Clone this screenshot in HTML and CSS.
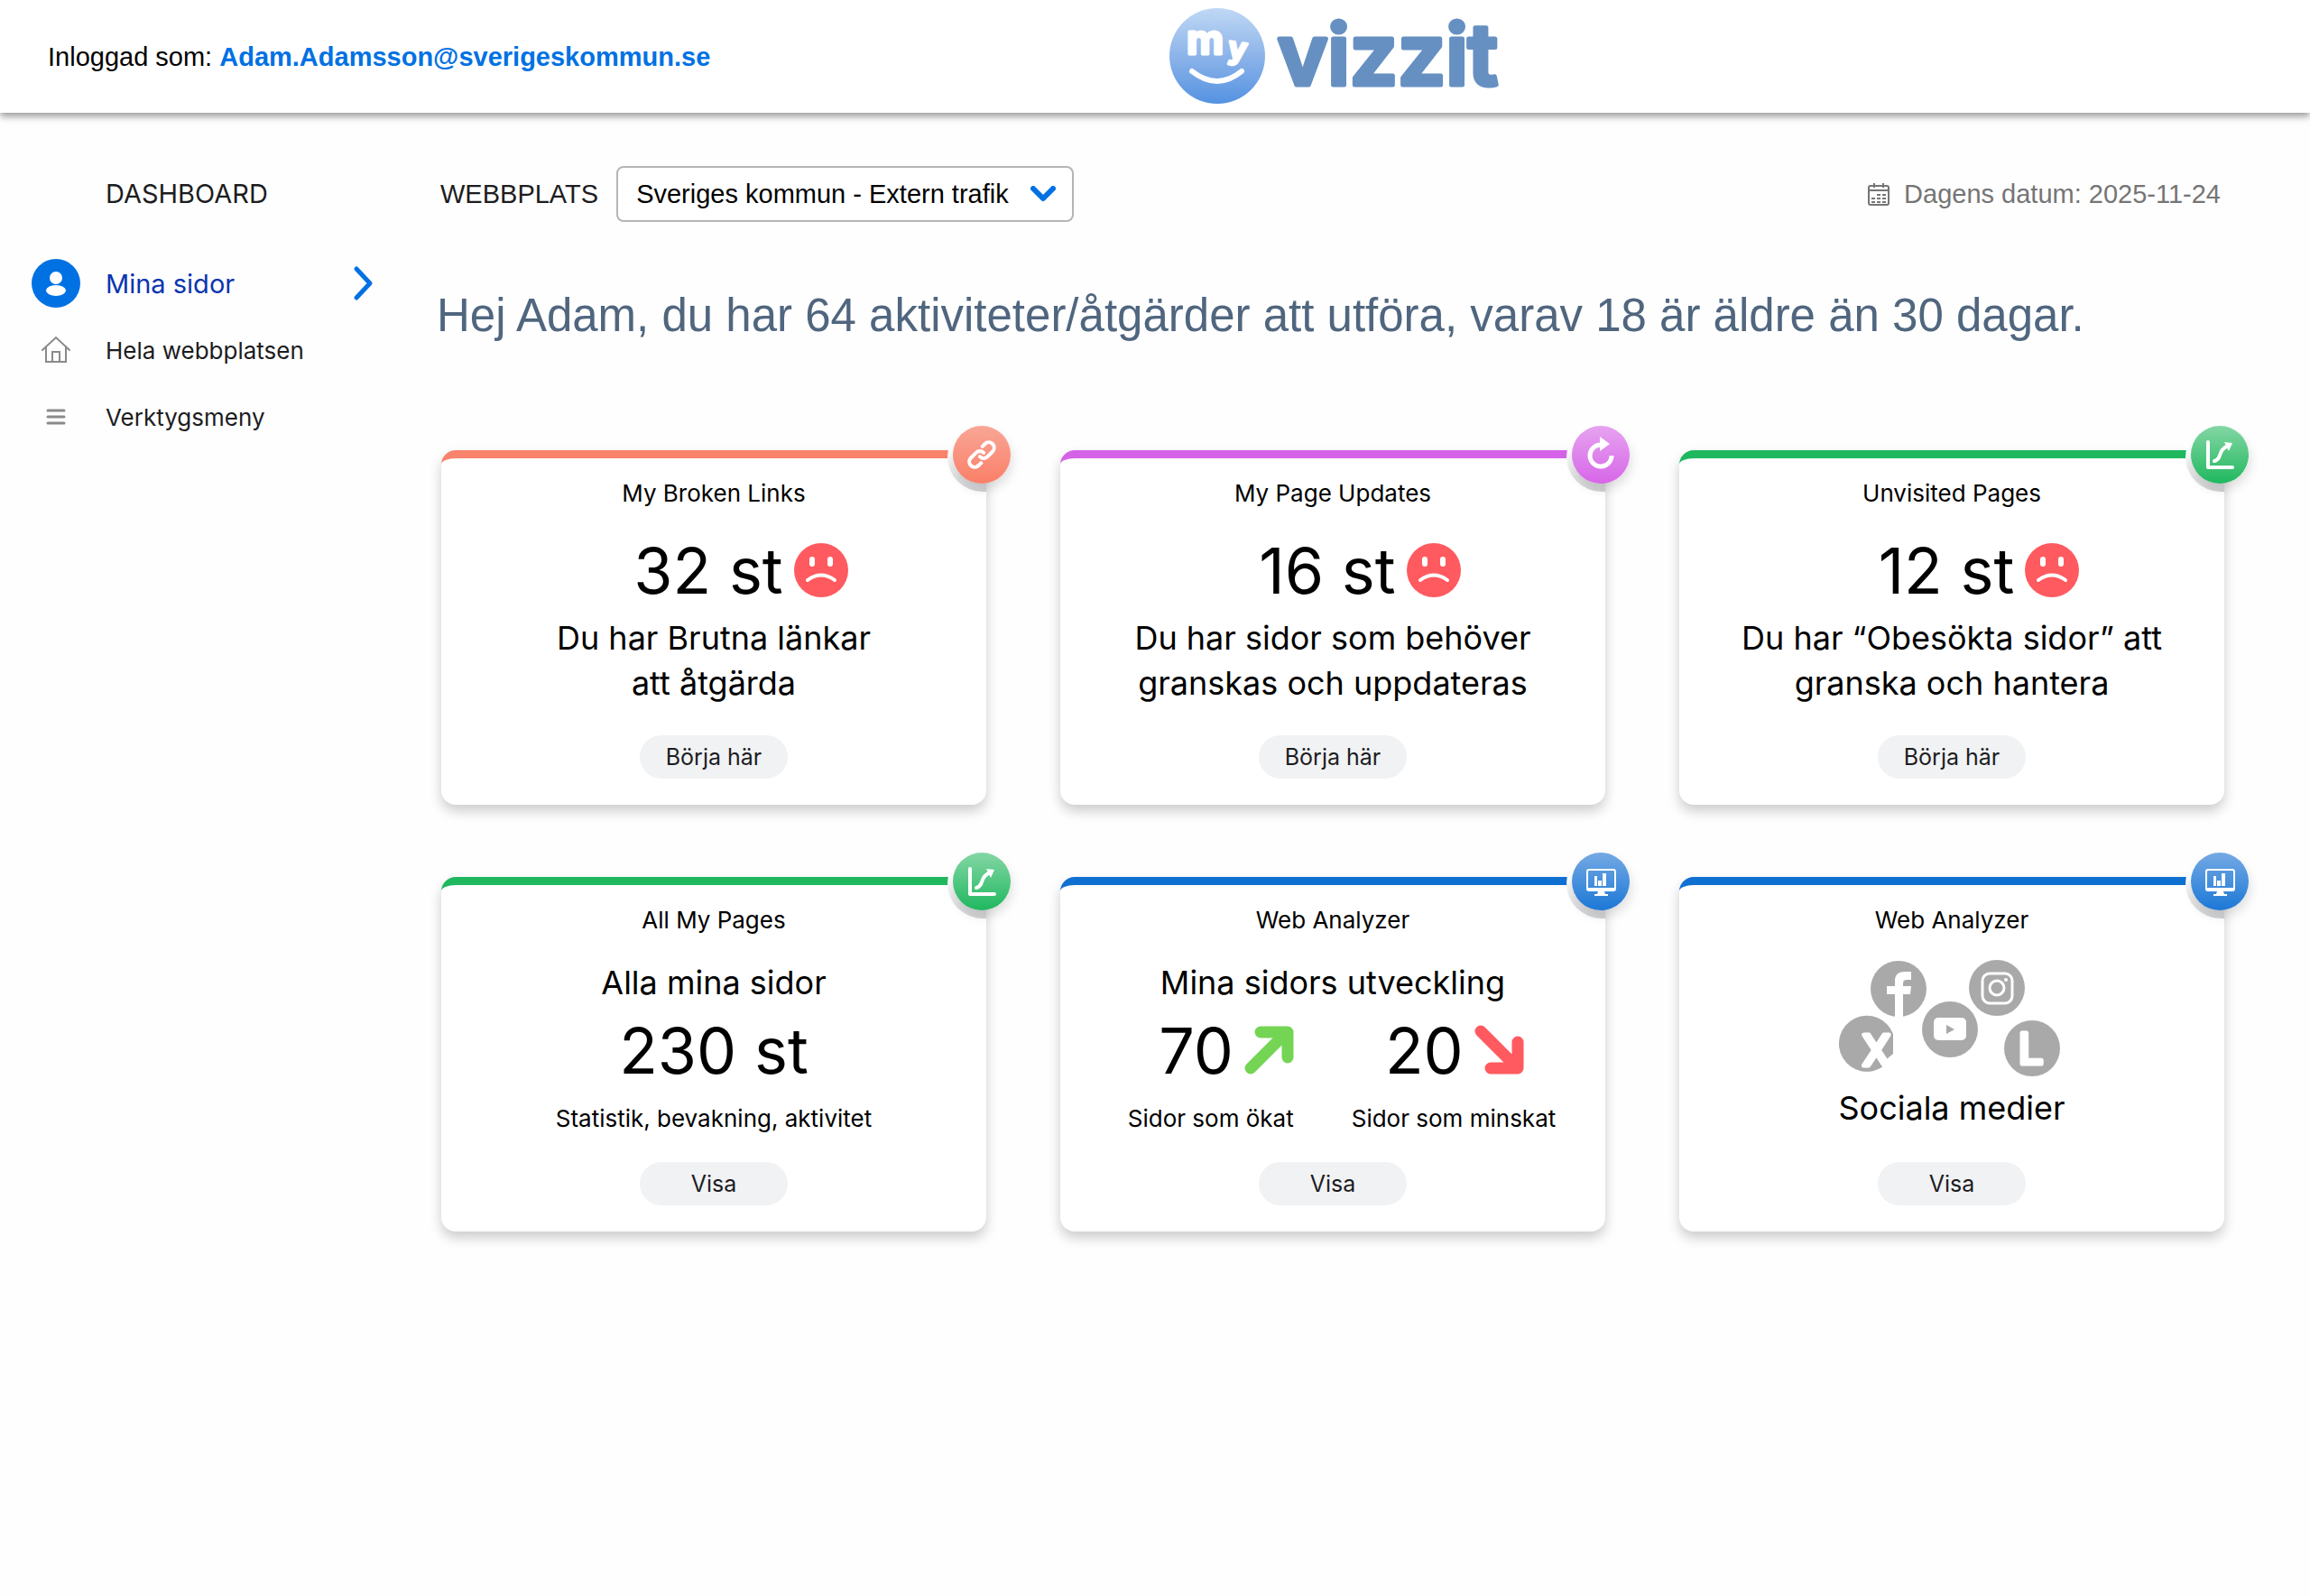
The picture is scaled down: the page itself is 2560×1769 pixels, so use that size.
FILE: index.html
```html
<!DOCTYPE html>
<html lang="sv">
<head>
    <meta charset="UTF-8">
    <meta name="viewport" content="width=device-width, initial-scale=1.0">
    <title>My Vizzit</title>
    <link rel="stylesheet" href="styles.css">
</head>
<body>
    <!-- Ikoner som används på flera kort -->
    <svg class="icon-defs" aria-hidden="true">
        <symbol id="icon-chart" viewBox="0 0 64 64">
            <path d="M19 18v28h27" fill="none" stroke="currentColor" stroke-width="4" stroke-linecap="round" stroke-linejoin="round"/>
            <path d="M26 39c9-2 3-13 16-17" fill="none" stroke="currentColor" stroke-width="4" stroke-linecap="round"/>
            <path d="M37 18l9 1-4 9z" fill="currentColor"/>
        </symbol>
        <symbol id="icon-monitor" viewBox="0 0 64 64">
            <rect x="17" y="19" width="31" height="23" rx="2" fill="none" stroke="currentColor" stroke-width="2"/>
            <path d="M17 39h31v3H17zM29 43h7l1 3h3v2H25v-2h3zM25 26h3v11h-3zM29 31h4v6h-4zM34 23h4v14h-4z" fill="currentColor"/>
        </symbol>
        <symbol id="icon-sad" viewBox="0 0 60 60">
            <circle cx="30" cy="30" r="30" fill="#ff5a5f"/>
            <rect x="17" y="15" width="6" height="11" rx="3" fill="#fff"/>
            <rect x="37" y="15" width="6" height="11" rx="3" fill="#fff"/>
            <path d="M15 41q15-11 30 0" fill="none" stroke="#fff" stroke-width="4" stroke-linecap="round"/>
        </symbol>
    </svg>

    <header>
        <p class="user">Inloggad som: <a href="#">Adam.Adamsson@sverigeskommun.se</a></p>
        <svg class="logo" viewBox="0 0 380 125" role="img" aria-label="my vizzit">
            <defs>
                <linearGradient id="ball" x1="0" y1="0" x2="0" y2="1">
                    <stop offset="0" stop-color="#bfd8f5"/>
                    <stop offset="0.5" stop-color="#8db4e9"/>
                    <stop offset="1" stop-color="#5592e2"/>
                </linearGradient>
            </defs>
            <circle cx="54" cy="62" r="53" fill="url(#ball)"/>
            <text class="logo-my" x="20" y="60" font-size="45">m</text>
            <text class="logo-my" x="65" y="64" font-size="34" transform="rotate(8 65 64)">y</text>
            <path d="M26 79q28 22 55 0" fill="none" stroke="#fff" stroke-width="6" stroke-linecap="round"/>
            <text class="logo-name" x="121" y="94">vizzit</text>
        </svg>
    </header>

    <div class="layout">
        <nav class="sidebar">
            <h2>DASHBOARD</h2>
            <a href="#" class="nav-item active">
                <svg width="54" height="54" viewBox="0 0 54 54">
                    <circle cx="27" cy="27" r="27" fill="#0071e3"/>
                    <circle cx="27" cy="21" r="7" fill="#fff"/>
                    <ellipse cx="27" cy="35" rx="11" ry="6" fill="#fff"/>
                </svg>
                <span>Mina sidor</span>
                <svg class="nav-arrow" width="26" height="42" viewBox="0 0 26 42">
                    <path d="M5 5l15 16L5 37" fill="none" stroke="#0071e3" stroke-width="5" stroke-linecap="round" stroke-linejoin="round"/>
                </svg>
            </a>
            <a href="#" class="nav-item">
                <svg width="54" height="54" viewBox="0 0 54 54" fill="none" stroke="#8a8a8a" stroke-width="2">
                    <path d="M12 27L27 13l15 14" stroke-linecap="round"/>
                    <path d="M16 24v16h22V24M23 40V29h8v11"/>
                </svg>
                <span>Hela webbplatsen</span>
            </a>
            <a href="#" class="nav-item">
                <svg width="54" height="54" viewBox="0 0 54 54">
                    <path d="M18 20h18M18 27h18M18 34h18" stroke="#8a8a8a" stroke-width="3" stroke-linecap="round"/>
                </svg>
                <span>Verktygsmeny</span>
            </a>
        </nav>

        <main>
            <div class="toolbar">
                <label for="site">WEBBPLATS</label>
                <div class="select-wrap">
                    <select id="site">
                        <option>Sveriges kommun - Extern trafik</option>
                    </select>
                    <svg class="select-arrow" width="28" height="18" viewBox="0 0 28 18">
                        <path d="M3 3l11 11L25 3" fill="none" stroke="#0071e3" stroke-width="6" stroke-linecap="round" stroke-linejoin="round"/>
                    </svg>
                </div>
                <p class="date">
                    <svg width="24" height="26" viewBox="0 0 24 26" fill="none" stroke="#757575" stroke-width="2">
                        <rect x="1" y="4" width="22" height="21" rx="2"/>
                        <path d="M1 9h22M7 1v5M17 1v5"/>
                        <path d="M10 14h4M16 14h4M4 18h4M10 18h4M16 18h4M4 22h4M10 22h4M16 22h4"/>
                    </svg>
                    Dagens datum: 2025-11-24
                </p>
            </div>

            <h1>Hej Adam, du har 64 aktiviteter/åtgärder att utföra, varav 18 är äldre än 30 dagar.</h1>

            <div class="cards">
                <section class="card coral">
                    <div class="notch"></div>
                    <svg class="badge" viewBox="0 0 64 64">
                        <g transform="rotate(45 32 32)" fill="none" stroke="#fff" stroke-width="4" stroke-linecap="round">
                            <path d="M26 25v-4a6 6 0 0 1 12 0v8a6 6 0 0 1-6 6"/>
                            <path d="M38 39v4a6 6 0 0 1-12 0v-8a6 6 0 0 1 6-6"/>
                        </g>
                    </svg>
                    <h3>My Broken Links</h3>
                    <div class="card-body alert">
                        <p class="number">32 st<svg class="mood"><use href="#icon-sad"/></svg></p>
                        <p class="text">Du har Brutna länkar<br>att åtgärda</p>
                    </div>
                    <button type="button">Börja här</button>
                </section>

                <section class="card purple">
                    <div class="notch"></div>
                    <svg class="badge" viewBox="0 0 64 64">
                        <path d="M32 21a12 12 0 1 0 12 12" fill="none" stroke="#fff" stroke-width="5"/>
                        <path d="M31 12l11 8-11 8z" fill="#fff"/>
                    </svg>
                    <h3>My Page Updates</h3>
                    <div class="card-body alert">
                        <p class="number">16 st<svg class="mood"><use href="#icon-sad"/></svg></p>
                        <p class="text">Du har sidor som behöver<br>granskas och uppdateras</p>
                    </div>
                    <button type="button">Börja här</button>
                </section>

                <section class="card green">
                    <div class="notch"></div>
                    <svg class="badge"><use href="#icon-chart"/></svg>
                    <h3>Unvisited Pages</h3>
                    <div class="card-body alert">
                        <p class="number">12 st<svg class="mood"><use href="#icon-sad"/></svg></p>
                        <p class="text">Du har “Obesökta sidor” att<br>granska och hantera</p>
                    </div>
                    <button type="button">Börja här</button>
                </section>

                <section class="card green">
                    <div class="notch"></div>
                    <svg class="badge"><use href="#icon-chart"/></svg>
                    <h3>All My Pages</h3>
                    <div class="card-body">
                        <p class="text">Alla mina sidor</p>
                        <p class="number">230 st</p>
                        <p class="small">Statistik, bevakning, aktivitet</p>
                    </div>
                    <button type="button">Visa</button>
                </section>

                <section class="card blue">
                    <div class="notch"></div>
                    <svg class="badge"><use href="#icon-monitor"/></svg>
                    <h3>Web Analyzer</h3>
                    <div class="card-body">
                        <p class="text">Mina sidors utveckling</p>
                        <div class="trend">
                            <p class="number">70<svg width="56" height="56" viewBox="0 0 56 56">
                                <path d="M7 48L41 14" stroke="#74d555" stroke-width="13" stroke-linecap="round"/>
                                <path d="M18 8h30v28" fill="none" stroke="#74d555" stroke-width="13" stroke-linecap="round" stroke-linejoin="round"/>
                                <path d="M30 10h16v16z" fill="#74d555"/>
                            </svg></p>
                            <p class="number">20<svg width="56" height="56" viewBox="0 0 56 56">
                                <path d="M7 7l36 36" stroke="#ff5a5f" stroke-width="13" stroke-linecap="round"/>
                                <path d="M18 48h30V19" fill="none" stroke="#ff5a5f" stroke-width="13" stroke-linecap="round" stroke-linejoin="round"/>
                                <path d="M30 46h16V30z" fill="#ff5a5f"/>
                            </svg></p>
                        </div>
                        <div class="trend-labels">
                            <p class="small">Sidor som ökat</p>
                            <p class="small">Sidor som minskat</p>
                        </div>
                    </div>
                    <button type="button">Visa</button>
                </section>

                <section class="card blue">
                    <div class="notch"></div>
                    <svg class="badge"><use href="#icon-monitor"/></svg>
                    <h3>Web Analyzer</h3>
                    <div class="card-body">
                        <svg class="social" viewBox="0 0 250 130">
                            <circle cx="66" cy="32" r="31" fill="#a9a9a9"/>
                            <path d="M62 64V38h-9v-9h9v-6q0-10 11-10h7v9h-5q-4 0-4 4v3h9l-1 9h-8v26z" fill="#fff"/>
                            <circle cx="175" cy="31" r="31" fill="#a9a9a9"/>
                            <rect x="159" y="15" width="33" height="33" rx="8" fill="none" stroke="#fff" stroke-width="3"/>
                            <circle cx="175" cy="31" r="8" fill="none" stroke="#fff" stroke-width="3"/>
                            <circle cx="185" cy="22" r="2" fill="#fff"/>
                            <circle cx="123" cy="77" r="31" fill="#a9a9a9"/>
                            <rect x="105" y="64" width="36" height="25" rx="5" fill="#fff"/>
                            <path d="M119 72l9 5-9 5z" fill="#a9a9a9"/>
                            <path d="M60 82A31 31 0 1 0 49 118L54 109 60 104z" fill="#a9a9a9"/>
                            <text x="26" y="117" font-size="49">X</text>
                            <circle cx="214" cy="98" r="31" fill="#a9a9a9"/>
                            <text x="199" y="115" font-size="49">L</text>
                        </svg>
                        <p class="text">Sociala medier</p>
                    </div>
                    <button type="button">Visa</button>
                </section>
            </div>
        </main>
    </div>
</body>
</html>
```
FILE: styles.css
```css
* {
    box-sizing: border-box;
}

body {
    font-family: Inter, sans-serif;
    margin: 0;
    background: #fefefe;
    color: #000;
}

h1, h2, h3, p {
    margin: 0;
    font-weight: normal;
}

.icon-defs {
    position: absolute;
    width: 0;
    height: 0;
}

header {
    display: flex;
    align-items: center;
    height: 125px;
    background: #fff;
    box-shadow: 0 4px 8px rgba(0, 0, 0, 0.4);
}

.user {
    flex: 0 0 50%;
    padding: 2px 0 0 53px;
    font-family: "Liberation Sans", sans-serif;
    font-size: 29px;
}

.user a {
    color: #0071e3;
    font-weight: bold;
    text-decoration: none;
}

.logo {
    width: 380px;
    height: 125px;
    margin-left: 15px;
    overflow: visible;
}

.logo-my {
    font-family: Inter, sans-serif;
    font-weight: bold;
    fill: #fff;
    stroke: #fff;
    stroke-width: 3px;
    stroke-linejoin: round;
}

.logo-name {
    font-family: Inter, sans-serif;
    font-size: 94px;
    font-weight: 600;
    fill: #6690c2;
    stroke: #6690c2;
    stroke-width: 5px;
    stroke-linejoin: round;
}

.layout {
    display: flex;
    padding-top: 59px;
}

/* Sidomeny */
.sidebar {
    flex: 0 0 484px;
    padding: 0 68px 0 35px;
}

.sidebar h2 {
    margin-bottom: 31px;
    padding-left: 82px;
    font-size: 29px;
    line-height: 62px;
    color: #1d1d1f;
}

.nav-item {
    display: flex;
    align-items: center;
    gap: 28px;
    height: 74px;
    font-size: 26px;
    color: #1d1d1f;
    text-decoration: none;
}

.nav-item.active {
    font-size: 29px;
    color: #0a35b0;
}

.nav-arrow {
    margin-left: auto;
}

/* Innehåll */
main {
    flex: 1;
    padding: 0 95px 60px 0;
}

.toolbar {
    display: flex;
    align-items: center;
    padding: 0 4px;
    font-family: "Liberation Sans", sans-serif;
    font-size: 29px;
    color: #1d1d1f;
}

.select-wrap {
    position: relative;
    margin-left: 20px;
}

.select-wrap select {
    height: 62px;
    padding: 0 70px 0 20px;
    border: 2px solid #b5b5b5;
    border-radius: 8px;
    background: #fff;
    font: inherit;
    color: #000;
    appearance: none;
}

.select-arrow {
    position: absolute;
    right: 20px;
    top: 22px;
    pointer-events: none;
}

.date {
    display: flex;
    align-items: center;
    gap: 16px;
    margin-left: auto;
    color: #757575;
}

h1 {
    margin: 74px 0 119px;
    font-family: "Liberation Sans", sans-serif;
    font-size: 51px;
    line-height: 60px;
    color: #50667f;
}

.cards {
    display: grid;
    grid-template-columns: repeat(3, 1fr);
    gap: 80px 82px;
    padding-left: 5px;
}

.card {
    position: relative;
    display: flex;
    flex-direction: column;
    align-items: center;
    padding: 22px 0 29px;
    border-top: 9px solid;
    border-radius: 16px;
    background: #fff;
    box-shadow: 0 7px 14px rgba(0, 0, 0, 0.2);
    text-align: center;
}

/* Urtag i hörnet bakom den runda ikonen */
.notch {
    position: absolute;
    top: -41px;
    right: 0;
    width: 43px;
    height: 78px;
    border-radius: 39px 0 0 39px;
    background: linear-gradient(to bottom, #fefefe 40%, #d2d3d5);
}

.badge {
    position: absolute;
    top: -36px;
    right: -27px;
    width: 64px;
    height: 64px;
    border-radius: 50%;
    box-shadow: 2px 7px 12px rgba(0, 0, 0, 0.12);
    color: #fff;
}

.coral {
    border-color: #f8826c;
}

.coral .badge {
    background: linear-gradient(#f9a696, #fa7f68);
}

.purple {
    border-color: #d563e8;
}

.purple .badge {
    background: linear-gradient(#e6a3f0, #d766e8);
}

.green {
    border-color: #1fb85f;
}

.green .badge {
    background: linear-gradient(#84d6a4, #1fb85f);
}

.blue {
    border-color: #1070d2;
}

.blue .badge {
    background: linear-gradient(#74a9e4, #1c78d6);
}

.card h3 {
    font-size: 26px;
    line-height: 34px;
}

.card-body {
    display: flex;
    flex-direction: column;
    align-items: center;
    min-height: 251px;
    padding-top: 27px;
}

.card-body.alert {
    padding-top: 18px;
}

.number {
    display: flex;
    align-items: center;
    gap: 12px;
    height: 100px;
    font-size: 70px;
}

.mood {
    width: 60px;
    height: 60px;
    margin-right: -60px;
}

.text {
    font-size: 36px;
    line-height: 50px;
}

.small {
    font-size: 26px;
    line-height: 52px;
}

.trend {
    display: flex;
    gap: 100px;
    padding-left: 20px;
}

.trend-labels {
    display: flex;
    gap: 64px;
    padding-left: 20px;
}

.social {
    width: 250px;
    height: 130px;
    margin-bottom: 9px;
}

.social text {
    font-family: Roboto, sans-serif;
    fill: #fff;
    stroke: #fff;
    stroke-width: 5px;
    stroke-linejoin: round;
}

.card button {
    width: 164px;
    height: 48px;
    padding: 0;
    border: none;
    border-radius: 24px;
    background: #f1f2f4;
    font-family: inherit;
    font-size: 25px;
    color: #1d1d1f;
    cursor: pointer;
}

@media (max-width: 1600px) {
    .cards {
        grid-template-columns: repeat(auto-fill, minmax(560px, 1fr));
    }
}
```
